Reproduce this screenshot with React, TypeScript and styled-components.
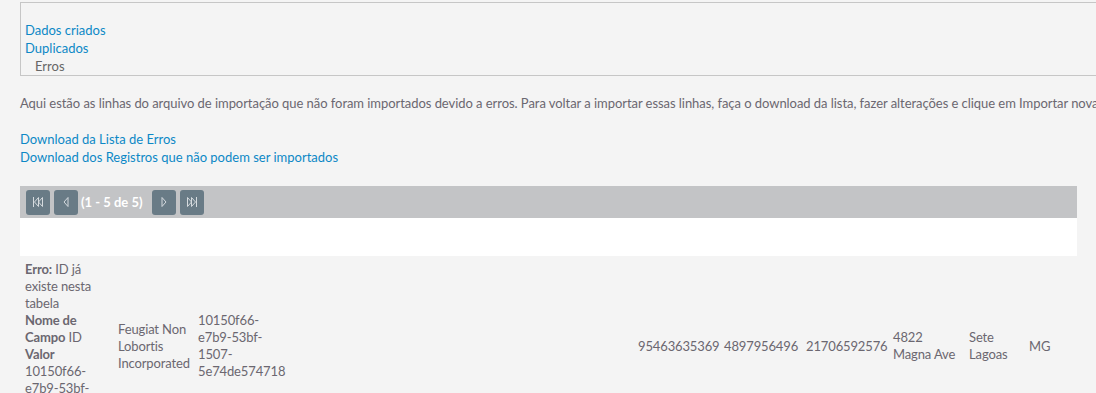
import React from "react";
import styled, { createGlobalStyle } from "styled-components";

const Global = createGlobalStyle`
  html, body { margin: 0; padding: 0; background: #f4f4f4; }
  body { font-family: Lato, "Open Sans", sans-serif; font-size: 13px; color: #6b6770; overflow: hidden; }
`;

const Page = styled.div`
  width: 1300px;
  padding: 2px 0 0 20px;
  box-sizing: border-box;
`;

const TabBox = styled.div`
  border: 1px solid #c6c6c6;
  padding: 18px 0 0 4px;
  line-height: 18px;
  font-size: 13px;
`;

const TabLink = styled.a<{ $active?: boolean }>`
  display: block;
  color: ${(p) => (p.$active ? "#666666" : "#0c88c6")};
  padding-left: ${(p) => (p.$active ? "10px" : "0")};
  text-decoration: none;
  cursor: pointer;
`;

const Intro = styled.p`
  margin: 18px 0 0 0;
  line-height: 18px;
  white-space: nowrap;
  letter-spacing: -0.004em;
`;

const Downloads = styled.div`
  margin-top: 18px;
  line-height: 18px;
`;

const DownloadLink = styled.a`
  display: block;
  color: #0c88c6;
  text-decoration: none;
  cursor: pointer;
`;

const Grid = styled.div`
  width: 1057px;
  margin-top: 20px;
`;

const Pager = styled.div`
  height: 32px;
  background: #c3c4c6;
  display: flex;
  align-items: center;
  padding: 0 6px;
  gap: 4px;
  box-sizing: border-box;
`;

const PageButton = styled.button<{ $gapLeft?: number }>`
  width: 24px;
  height: 25px;
  border: none;
  border-radius: 3px;
  background: #697b86;
  padding: 0;
  margin-left: ${(p) => p.$gapLeft ?? 0}px;
  display: flex;
  align-items: center;
  justify-content: center;
  cursor: pointer;
`;

const PageInfo = styled.span`
  color: #ffffff;
  font-weight: 700;
  font-size: 13px;
  margin-left: -1px;
`;

const Spacer = styled.div`
  height: 38px;
  background: #ffffff;
`;

const Table = styled.table`
  width: 1057px;
  table-layout: fixed;
  border-collapse: collapse;
`;

const Cell = styled.td<{ $padRight?: number }>`
  padding: 5px ${(p) => p.$padRight ?? 0}px 5px 5px;
  vertical-align: middle;
  line-height: 17px;
  font-size: 13px;
  color: #6b6770;
  letter-spacing: -0.01em;
`;

const Label = styled.b`
  font-weight: 700;
`;

const Icon = ({ kind }: { kind: "first" | "prev" | "next" | "last" }) => {
  const stroke = "#d5dade";
  const common = { fill: "none", stroke, strokeWidth: 1 } as const;
  return (
    <svg width="12" height="12" viewBox="0 0 12 12">
      {kind === "first" && (
        <g {...common}>
          <line x1="1.5" y1="1" x2="1.5" y2="11" />
          <polygon points="6.5,1.5 2.5,6 6.5,10.5" />
          <polygon points="10.5,1.5 6.5,6 10.5,10.5" />
        </g>
      )}
      {kind === "prev" && (
        <g {...common}>
          <polygon points="8,1.5 4,6 8,10.5" />
        </g>
      )}
      {kind === "next" && (
        <g {...common}>
          <polygon points="4,1.5 8,6 4,10.5" />
        </g>
      )}
      {kind === "last" && (
        <g {...common}>
          <line x1="10.5" y1="1" x2="10.5" y2="11" />
          <polygon points="5.5,1.5 9.5,6 5.5,10.5" />
          <polygon points="1.5,1.5 5.5,6 1.5,10.5" />
        </g>
      )}
    </svg>
  );
};

const widths = [93, 80, 95, 345, 86, 82, 87, 76, 60, 53];

const rowValues: { text: string; padRight?: number }[] = [
  { text: "95463635369" },
  { text: "4897956496" },
  { text: "21706592576" },
  { text: "4822 Magna Ave", padRight: 5 },
  { text: "Sete Lagoas" },
  { text: "MG" },
];

export default function App() {
  return (
    <>
      <Global />
      <Page>
        <TabBox>
          <TabLink>Dados criados</TabLink>
          <TabLink>Duplicados</TabLink>
          <TabLink $active>Erros</TabLink>
        </TabBox>
        <Intro>
          Aqui estão as linhas do arquivo de importação que não foram importados devido a erros. Para voltar a importar essas linhas, faça o download da lista, fazer alterações e clique em Importar novamente.
        </Intro>
        <Downloads>
          <DownloadLink>Download da Lista de Erros</DownloadLink>
          <DownloadLink>Download dos Registros que não podem ser importados</DownloadLink>
        </Downloads>
        <Grid>
          <Pager>
            <PageButton aria-label="Primeira"><Icon kind="first" /></PageButton>
            <PageButton aria-label="Anterior"><Icon kind="prev" /></PageButton>
            <PageInfo>(1 - 5 de 5)</PageInfo>
            <PageButton aria-label="Próxima" $gapLeft={5}><Icon kind="next" /></PageButton>
            <PageButton aria-label="Última"><Icon kind="last" /></PageButton>
          </Pager>
          <Spacer />
          <Table>
            <colgroup>
              {widths.map((w, i) => (
                <col key={i} style={{ width: w }} />
              ))}
            </colgroup>
            <tbody>
              <tr>
                <Cell>
                  <div><Label>Erro:</Label> ID já existe nesta tabela</div>
                  <div><Label>Nome de Campo</Label> ID</div>
                  <div><Label>Valor</Label> 10150f66-e7b9-53bf-1507-5e74de574718</div>
                </Cell>
                <Cell>Feugiat Non Lobortis Incorporated</Cell>
                <Cell>10150f66-e7b9-53bf-1507-5e74de574718</Cell>
                <Cell />
                {rowValues.map((v, i) => (
                  <Cell key={i} $padRight={v.padRight}>{v.text}</Cell>
                ))}
              </tr>
            </tbody>
          </Table>
        </Grid>
      </Page>
    </>
  );
}
